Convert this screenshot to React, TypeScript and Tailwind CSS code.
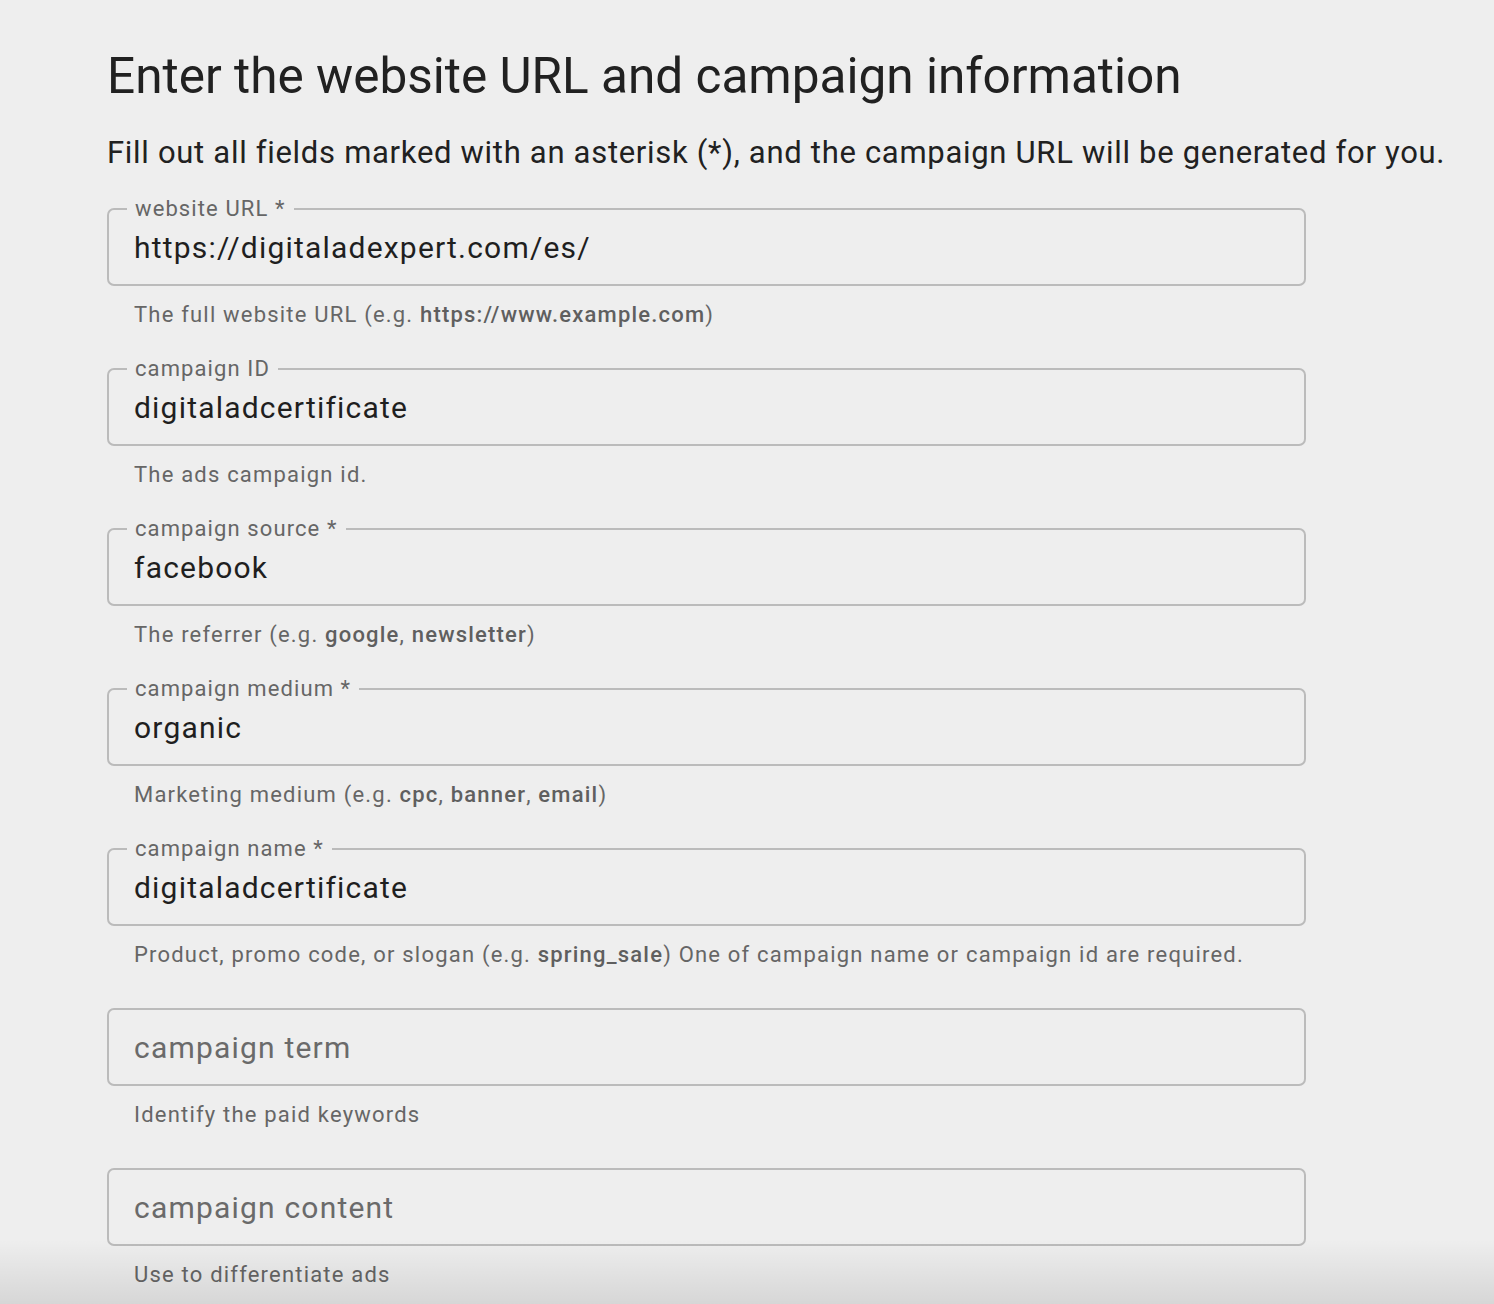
import React from "react";

type Field = {
  label: string;
  required?: boolean;
  value: string;
  helper: React.ReactNode;
};

const B = ({ children }: { children: React.ReactNode }) => (
  <span className="font-medium text-[#5f5f5f]">{children}</span>
);

const fields: Field[] = [
  {
    label: "website URL",
    required: true,
    value: "https://digitaladexpert.com/es/",
    helper: (
      <>
        The full website URL (e.g. <B>https://www.example.com</B>)
      </>
    ),
  },
  {
    label: "campaign ID",
    value: "digitaladcertificate",
    helper: "The ads campaign id.",
  },
  {
    label: "campaign source",
    required: true,
    value: "facebook",
    helper: (
      <>
        The referrer (e.g. <B>google</B>, <B>newsletter</B>)
      </>
    ),
  },
  {
    label: "campaign medium",
    required: true,
    value: "organic",
    helper: (
      <>
        Marketing medium (e.g. <B>cpc</B>, <B>banner</B>, <B>email</B>)
      </>
    ),
  },
  {
    label: "campaign name",
    required: true,
    value: "digitaladcertificate",
    helper: (
      <>
        Product, promo code, or slogan (e.g. <B>spring_sale</B>) One of
        campaign name or campaign id are required.
      </>
    ),
  },
  {
    label: "campaign term",
    value: "",
    helper: "Identify the paid keywords",
  },
  {
    label: "campaign content",
    value: "",
    helper: "Use to differentiate ads",
  },
];

function OutlinedField({ field }: { field: Field }) {
  const filled = field.value !== "";
  return (
    <div className="mb-[39px]">
      <div className="relative h-[78px] rounded-[7px] border-2 border-[#bbbbbb]">
        {filled && (
          <span className="absolute left-[18px] top-[-15px] bg-[#eeeeee] px-[8px] text-[22px] leading-[28px] tracking-[1.1px] text-[#666666]">
            {field.label}
            {field.required && " *"}
          </span>
        )}
        <div
          className={`flex h-full items-center pl-[25px] text-[30px] tracking-[1.2px] ${
            filled ? "text-[#1f1f1f]" : "text-[#6a6a6a]"
          }`}
        >
          {filled ? field.value : field.label}
        </div>
      </div>
      <p className="mt-[15px] pl-[27px] text-[22px] leading-[28px] tracking-[1.2px] text-[#666666]">
        {field.helper}
      </p>
    </div>
  );
}

export default function App() {
  return (
    <div
      className="relative h-[1304px] overflow-hidden bg-[#eeeeee] pl-[107px]"
      style={{ fontFamily: "Roboto, 'Noto Sans', sans-serif" }}
    >
      <h1 className="pt-[46px] text-[49.5px] leading-[60px] text-[#212121]">
        Enter the website URL and campaign information
      </h1>
      <p className="mt-[27px] whitespace-nowrap text-[31px] leading-[40px] tracking-[0.7px] text-[#212121]">
        Fill out all fields marked with an asterisk (*), and the campaign URL
        will be generated for you.
      </p>
      <div className="mt-[35px] w-[1199px]">
        {fields.map((f) => (
          <OutlinedField key={f.label} field={f} />
        ))}
      </div>
      <div className="pointer-events-none absolute bottom-0 left-0 right-0 h-[64px] bg-gradient-to-b from-transparent to-black/10" />
    </div>
  );
}
